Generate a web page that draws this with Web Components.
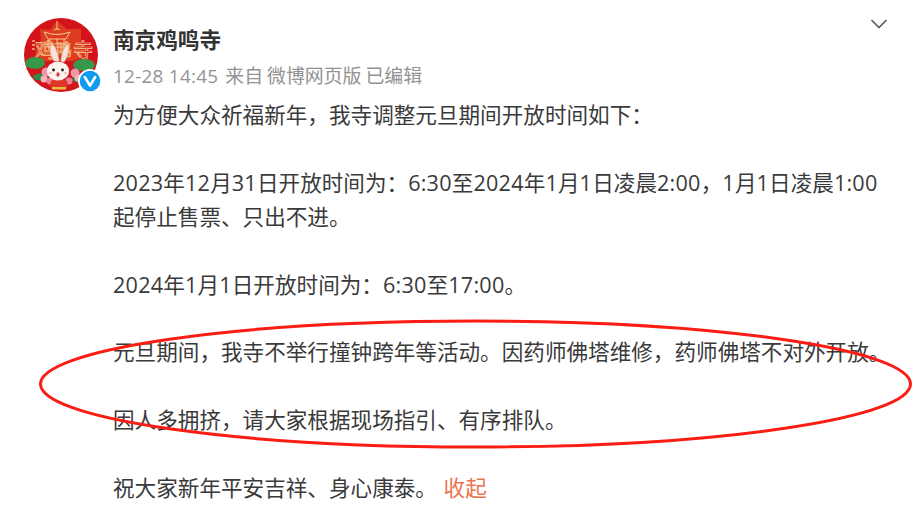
<!DOCTYPE html>
<html lang="zh">
<head>
<meta charset="utf-8">
<title>南京鸡鸣寺</title>
<style>
  html, body { margin: 0; background: #fff; }
  body { width: 915px; height: 515px; overflow: hidden; font-family: "Open Sans", "Noto Sans CJK SC", sans-serif; }
</style>
</head>
<body>
<weibo-post>
  <weibo-avatar slot="avatar"></weibo-avatar>
  <span slot="name">南京鸡鸣寺</span>
  <span slot="meta" class="time">12-28 14:45</span>
  <span slot="meta" class="from">来自 微博网页版 已编辑</span>
  <weibo-text>为方便大众祈福新年，我寺调整元旦期间开放时间如下：<br><br><span>2023</span>年<span>12</span>月<span>31</span>日开放时间为：<span>6:30</span>至<span>2024</span>年<span>1</span>月<span>1</span>日凌晨<span>2:00</span>，<span>1</span>月<span>1</span>日凌晨<span>1:00</span><br>起停止售票、只出不进。<br><br><span>2024</span>年<span>1</span>月<span>1</span>日开放时间为：<span>6:30</span>至<span>17:00</span>。<br><br>元旦期间，我寺不举行撞钟跨年等活动。因药师佛塔维修，药师佛塔不对外开放。<br><br>因人多拥挤，请大家根据现场指引、有序排队。<br><br>祝大家新年平安吉祥、身心康泰。 <a>收起</a></weibo-text>
</weibo-post>
<red-ellipse></red-ellipse>

<script>
const avatarTemplate = document.createElement("template");
avatarTemplate.innerHTML = `
  <style>
    :host { display: block; position: relative; width: 76px; height: 76px; }
    svg { display: block; }
    .badge { position: absolute; right: -3px; bottom: 0; }
  </style>
  <svg width="76" height="76" viewBox="0 0 76 76">
    <defs><clipPath id="c"><circle cx="38" cy="38" r="37"/></clipPath></defs>
    <g clip-path="url(#c)">
      <rect width="76" height="76" fill="#d4141b"/>
      <!-- orange petals behind the pagoda -->
      <path d="M34 4 L44 12 L58 12 L58 27 L64 38 L50 44 H20 L12 36 L18 22 L17 12 L27 13 Z" fill="#dd3d1e"/>
      <!-- pagoda -->
      <path d="M34 4 V13 M31 13 Q34 10 37 13 M21 15 Q34 20 47 15 L43 22 H25 Z M24 27 H44 M27 22 V27 M41 22 V27 M34 22 V27 M22 30 H46" fill="none" stroke="#f4c88d" stroke-width="1"/>
      <!-- temple name -->
      <text x="12" y="41" font-size="20" fill="none" stroke="#f6cf95" stroke-width=".7" font-family="'Noto Sans CJK SC', sans-serif">鸡</text>
      <text x="33" y="38" font-size="16" fill="none" stroke="#f6cf95" stroke-width=".6" font-family="'Noto Sans CJK SC', sans-serif">鸣</text>
      <text x="50" y="41" font-size="20" fill="none" stroke="#f6cf95" stroke-width=".7" font-family="'Noto Sans CJK SC', sans-serif">寺</text>
      <path d="M9 24 h3 M9 28 h3 M9 32 h3" stroke="#eeb27a" stroke-width="1.4"/>
      <!-- leaves and flowers -->
      <ellipse cx="12" cy="46" rx="10" ry="6" fill="#37984c"/>
      <ellipse cx="61" cy="48" rx="11" ry="6" fill="#37984c"/>
      <ellipse cx="17" cy="60" rx="7" ry="3.5" fill="#2f8a45"/>
      <ellipse cx="57" cy="62" rx="8" ry="3.5" fill="#2f8a45"/>
      <circle cx="23" cy="55" r="4.5" fill="#f096aa"/>
      <circle cx="21" cy="62" r="3.5" fill="#f4b2bf"/>
      <circle cx="52" cy="56" r="4.5" fill="#f096aa"/>
      <circle cx="55" cy="61" r="3.5" fill="#f4b2bf"/>
      <circle cx="27" cy="64" r="3.5" fill="#ec7f97"/>
      <circle cx="46" cy="64" r="3.5" fill="#ec7f97"/>
      <!-- rabbit -->
      <path d="M31 44 Q25 34 29 27 Q34 31 36 44 Z M38 44 Q39 32 45 27 Q47 36 41 45 Z" fill="#f8e4dd" stroke="#efc3bb" stroke-width=".8"/>
      <path d="M28 64 Q36 59 44 64 L45 70 H27 Z" fill="#df3526"/>
      <rect x="29" y="70" width="14" height="2.5" fill="#ecbd46"/>
      <ellipse cx="35" cy="54" rx="11" ry="9.5" fill="#fbf3ed"/>
      <circle cx="30.5" cy="53" r="1.4" fill="#2a1a18"/>
      <circle cx="39.5" cy="53" r="1.4" fill="#2a1a18"/>
      <ellipse cx="27.5" cy="56" rx="1.8" ry="1.1" fill="#f5bcb8"/>
      <ellipse cx="42.5" cy="56" rx="1.8" ry="1.1" fill="#f5bcb8"/>
      <ellipse cx="35" cy="57.5" rx="1.7" ry="2.2" fill="#d6453c"/>
    </g>
  </svg>
  <svg class="badge" width="24" height="24" viewBox="0 0 24 24">
    <circle cx="12" cy="12" r="12" fill="#fff"/>
    <circle cx="12" cy="12" r="10.3" fill="#0f9bf0"/>
    <path d="M6.8 8 L12 16.6 L17.2 8" fill="none" stroke="#fff" stroke-width="2.6" stroke-linecap="round" stroke-linejoin="round"/>
  </svg>
`;

class WeiboAvatar extends HTMLElement {
  constructor() {
    super();
    this.attachShadow({ mode: "open" });
    this.shadowRoot.appendChild(avatarTemplate.content.cloneNode(true));
  }
}

const postTemplate = document.createElement("template");
postTemplate.innerHTML = `
  <style>
    :host { display: flex; gap: 14px; padding: 17px 0 0 23px; box-sizing: border-box; width: 915px; position: relative; }
    .side { flex: none; }
    .main { flex: 1; min-width: 0; }
    .name { font-size: 21.6px; line-height: 30px; font-weight: 700; color: #333; margin-top: 8px; }
    .meta { font-size: 18.9px; line-height: 26px; color: #939393; margin-top: 8px; }
    ::slotted(.time) { letter-spacing: .27px; margin-right: 7px; }
    ::slotted(.from) { word-spacing: -1px; }
    .more { position: absolute; top: 17px; right: 26px; display: block; }
  </style>
  <div class="side"><slot name="avatar"></slot></div>
  <div class="main">
    <div class="name"><slot name="name"></slot></div>
    <div class="meta"><slot name="meta"></slot></div>
    <slot></slot>
  </div>
  <svg class="more" width="20" height="14" viewBox="0 0 20 14">
    <path d="M2.5 3 L10 10.5 L17.5 3" fill="none" stroke="#5c5c5c" stroke-width="1.7"/>
  </svg>
`;

class WeiboPost extends HTMLElement {
  constructor() {
    super();
    this.attachShadow({ mode: "open" });
    this.shadowRoot.appendChild(postTemplate.content.cloneNode(true));
  }
}

class WeiboText extends HTMLElement {
  constructor() {
    super();
    this.attachShadow({ mode: "open" });
    this.shadowRoot.innerHTML = `
      <style>
        :host { display: block; font-size: 21.6px; line-height: 33.9px; color: #3a3a3a; margin-top: 9px; white-space: nowrap; }
        ::slotted(span) { letter-spacing: .24px; }
        ::slotted(a) { color: #eb7350; margin-left: 1px; }
      </style>
      <slot></slot>
    `;
  }
}

class RedEllipse extends HTMLElement {
  constructor() {
    super();
    this.attachShadow({ mode: "open" });
    this.shadowRoot.innerHTML = `
      <style>
        :host { display: block; position: absolute; left: 0; top: 0; pointer-events: none; }
        svg { display: block; }
      </style>
      <svg width="915" height="515" viewBox="0 0 915 515">
        <ellipse cx="475.5" cy="384" rx="435" ry="63" fill="none" stroke="#fb1c14" stroke-width="3"/>
      </svg>
    `;
  }
}

customElements.define("weibo-avatar", WeiboAvatar);
customElements.define("weibo-post", WeiboPost);
customElements.define("weibo-text", WeiboText);
customElements.define("red-ellipse", RedEllipse);
</script>
</body>
</html>
